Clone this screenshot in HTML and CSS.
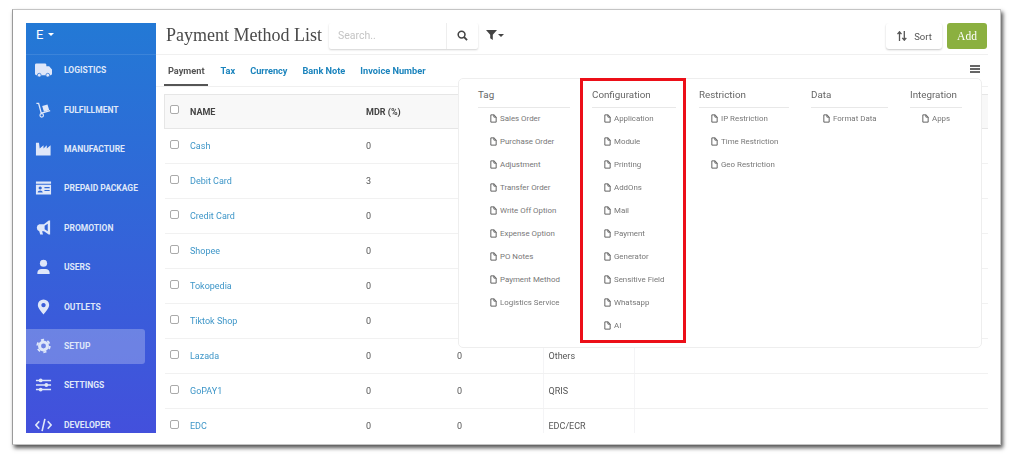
FILE: index.html
```html
<!DOCTYPE html>
<html lang="en">
<head>
    <meta charset="UTF-8">
    <title>Payment Method List</title>
    <link rel="stylesheet" href="styles.css">
</head>
<body>

<svg class="defs" width="0" height="0">
    <symbol id="file" viewBox="0 0 10 12">
        <path d="M1.2 .8h4.600l3 3v7.400h-7.600z M5.600 .8v3.200h3.200" fill="none" stroke="currentColor" stroke-width="1.300" stroke-linejoin="round"/>
    </symbol>
</svg>

<div class="frame">
    <!-- Sidebar -->
    <aside class="sidebar">
        <div class="brand">E <span class="caret"></span></div>
        <nav class="nav">
            <a class="nav-item">
                <svg class="nav-icon" viewBox="0 0 18 16"><path d="M1.500 1h9a1.500 1.500 0 0 1 1.500 1.500V4h3l3 3.500v4.500a1.500 1.500 0 0 1-1.500 1.500H1.500A1.500 1.500 0 0 1 0 12V2.500A1.500 1.500 0 0 1 1.500 1z"/><circle cx="4.500" cy="13.500" r="2" stroke="#2a72d6" stroke-width=".8"/><circle cx="13.500" cy="13.500" r="2" stroke="#2a72d6" stroke-width=".8"/></svg>
                LOGISTICS
            </a>
            <a class="nav-item">
                <svg class="nav-icon" viewBox="0 0 18 18"><path d="M1 1.500h2.500l3 11 10-2.700" fill="none" stroke="currentColor" stroke-width="1.500"/><circle cx="7" cy="15" r="2" fill="none" stroke="currentColor" stroke-width="1.300"/><path d="M7.500 4.500l6-1.700 2 6.500-6 1.700z"/></svg>
                FULFILLMENT
            </a>
            <a class="nav-item">
                <svg class="nav-icon" viewBox="0 0 18 16"><path d="M1 15V1.500h3.200l.8 6 4-3.500v3.500l3.500-3.500v3.500l4-3.500V15z"/></svg>
                MANUFACTURE
            </a>
            <a class="nav-item">
                <svg class="nav-icon" viewBox="0 0 18 16"><path fill-rule="evenodd" d="M1 1h16v2.500H1z M1 4.500h16V15H1z M5.500 6.300a1.700 1.700 0 1 0 .01 0z M2.800 12.800h5.400c0-3-5.400-3-5.400 0z M10 7h5.500v1.200H10z M10 10h5.500v1.200H10z"/></svg>
                PREPAID PACKAGE
            </a>
            <a class="nav-item">
                <svg class="nav-icon" viewBox="0 0 18 16"><path fill-rule="evenodd" d="M14.500 0h1.500v15h-1.500l-5-3.500H7.500l1 3.500H5.500l-1-3.500A4 4 0 0 1 4.500 4h5z M13.500 3.500l-3.300 2.200v3.600l3.300 2.200z"/></svg>
                PROMOTION
            </a>
            <a class="nav-item">
                <svg class="nav-icon" viewBox="0 0 18 16"><circle cx="9" cy="4" r="3.800"/><path d="M2.500 15.500v-1.500a4.500 4.500 0 0 1 4.500-4h4a4.500 4.500 0 0 1 4.500 4v1.500z"/></svg>
                USERS
            </a>
            <a class="nav-item">
                <svg class="nav-icon" viewBox="0 0 18 16"><path fill-rule="evenodd" d="M9 0a6 6 0 0 1 6 6c0 3.500-4 7.500-6 10-2-2.500-6-6.500-6-10a6 6 0 0 1 6-6z M9 3.700a2.300 2.300 0 1 0 .01 0z"/></svg>
                OUTLETS
            </a>
            <a class="nav-item active">
                <svg class="nav-icon" viewBox="0 0 18 16"><circle cx="9" cy="8" r="4.200" fill="none" stroke="currentColor" stroke-width="3.200"/><circle cx="9" cy="8" r="6.600" fill="none" stroke="currentColor" stroke-width="2" stroke-dasharray="3.300 3.610"/></svg>
                SETUP
            </a>
            <a class="nav-item">
                <svg class="nav-icon" viewBox="0 0 18 16"><path d="M1 2.500h16v1.500H1z M1 7.300h16v1.500H1z M1 12h16v1.500H1z"/><circle cx="6" cy="3.200" r="2"/><circle cx="12" cy="8" r="2"/><circle cx="6" cy="12.800" r="2"/></svg>
                SETTINGS
            </a>
            <a class="nav-item">
                <svg class="nav-icon" viewBox="0 0 18 16"><path d="M4.500 4L1 8l3.500 4 M13.500 4L17 8l-3.500 4 M10.500 1.500l-3 13" fill="none" stroke="currentColor" stroke-width="1.700"/></svg>
                DEVELOPER
            </a>
        </nav>
    </aside>

    <!-- Main -->
    <main class="main">
        <div class="topbar">
            <h1 class="title">Payment Method List</h1>
            <div class="search">
                <span class="search-input">Search..</span>
                <span class="search-btn">
                    <svg width="11" height="11" viewBox="0 0 12 12"><circle cx="5" cy="5" r="3.700" fill="none" stroke="currentColor" stroke-width="1.700"/><path d="M7.800 7.800l3.200 3.200" stroke="currentColor" stroke-width="2"/></svg>
                </span>
            </div>
            <span class="filter">
                <svg width="11" height="10" viewBox="0 0 11 10"><path d="M0 0h11L6.800 4.800V10L4.200 8.200V4.800z"/></svg>
                <span class="caret dark"></span>
            </span>
            <div class="actions">
                <button class="btn-sort">
                    <svg width="10" height="10" viewBox="0 0 10 10"><path d="M2.500 10V2M.5 3.200L2.500 .8l2 2.400 M7.300 0v8M5.300 6.800l2 2.400 2-2.400" fill="none" stroke="currentColor" stroke-width="1.300"/></svg>
                    Sort
                </button>
                <button class="btn-add">Add</button>
            </div>
        </div>

        <div class="tabs">
            <a class="tab active">Payment</a>
            <a class="tab">Tax</a>
            <a class="tab">Currency</a>
            <a class="tab">Bank Note</a>
            <a class="tab">Invoice Number</a>
            <span class="bars"></span>
        </div>

        <table class="list">
            <thead>
                <tr><th class="c-check"><span class="check"></span></th><th class="c-name">NAME</th><th class="c-num">MDR (%)</th><th class="c-num"></th><th class="c-type"></th><th></th></tr>
            </thead>
            <tbody>
                <tr><td><span class="check"></span></td><td><a>Cash</a></td><td>0</td><td></td><td></td><td></td></tr>
                <tr><td><span class="check"></span></td><td><a>Debit Card</a></td><td>3</td><td></td><td></td><td></td></tr>
                <tr><td><span class="check"></span></td><td><a>Credit Card</a></td><td>0</td><td></td><td></td><td></td></tr>
                <tr><td><span class="check"></span></td><td><a>Shopee</a></td><td>0</td><td></td><td></td><td></td></tr>
                <tr><td><span class="check"></span></td><td><a>Tokopedia</a></td><td>0</td><td></td><td></td><td></td></tr>
                <tr><td><span class="check"></span></td><td><a>Tiktok Shop</a></td><td>0</td><td></td><td></td><td></td></tr>
                <tr><td><span class="check"></span></td><td><a>Lazada</a></td><td>0</td><td>0</td><td>Others</td><td></td></tr>
                <tr><td><span class="check"></span></td><td><a>GoPAY1</a></td><td>0</td><td>0</td><td>QRIS</td><td></td></tr>
                <tr><td><span class="check"></span></td><td><a>EDC</a></td><td>0</td><td>0</td><td>EDC/ECR</td><td></td></tr>
            </tbody>
        </table>

        <!-- Dropdown menu -->
        <div class="menu">
            <div class="menu-col col-tag">
                <h4>Tag</h4>
                <a><svg class="file"><use href="#file"/></svg>Sales Order</a>
                <a><svg class="file"><use href="#file"/></svg>Purchase Order</a>
                <a><svg class="file"><use href="#file"/></svg>Adjustment</a>
                <a><svg class="file"><use href="#file"/></svg>Transfer Order</a>
                <a><svg class="file"><use href="#file"/></svg>Write Off Option</a>
                <a><svg class="file"><use href="#file"/></svg>Expense Option</a>
                <a><svg class="file"><use href="#file"/></svg>PO Notes</a>
                <a><svg class="file"><use href="#file"/></svg>Payment Method</a>
                <a><svg class="file"><use href="#file"/></svg>Logistics Service</a>
            </div>
            <div class="menu-col col-config">
                <h4>Configuration</h4>
                <a><svg class="file"><use href="#file"/></svg>Application</a>
                <a><svg class="file"><use href="#file"/></svg>Module</a>
                <a><svg class="file"><use href="#file"/></svg>Printing</a>
                <a><svg class="file"><use href="#file"/></svg>AddOns</a>
                <a><svg class="file"><use href="#file"/></svg>Mail</a>
                <a><svg class="file"><use href="#file"/></svg>Payment</a>
                <a><svg class="file"><use href="#file"/></svg>Generator</a>
                <a><svg class="file"><use href="#file"/></svg>Sensitive Field</a>
                <a><svg class="file"><use href="#file"/></svg>Whatsapp</a>
                <a><svg class="file"><use href="#file"/></svg>AI</a>
            </div>
            <div class="menu-col col-restrict">
                <h4>Restriction</h4>
                <a><svg class="file"><use href="#file"/></svg>IP Restriction</a>
                <a><svg class="file"><use href="#file"/></svg>Time Restriction</a>
                <a><svg class="file"><use href="#file"/></svg>Geo Restriction</a>
            </div>
            <div class="menu-col col-data">
                <h4>Data</h4>
                <a><svg class="file"><use href="#file"/></svg>Format Data</a>
            </div>
            <div class="menu-col col-integration">
                <h4>Integration</h4>
                <a><svg class="file"><use href="#file"/></svg>Apps</a>
            </div>
            <span class="highlight"></span>
        </div>
    </main>
</div>

</body>
</html>
```
FILE: styles.css
```css
html, body {
    height: 100%;
    overflow: hidden;
}
body {
    margin: 0;
    background-color: #fff;
    font-family: Roboto, "Liberation Sans", sans-serif;
}
.defs {
    position: absolute;
}
.frame {
    box-sizing: border-box;
    display: flex;
    width: 989px;
    height: 436px;
    margin: 9px 0 0 12px;
    padding: 13px 12px 11px 13px;
    border: 1px solid #c4c4c4;
    border-left-color: #9a9a9a;
    box-shadow: 2px 3px 4px #555;
    background-color: #fff;
    filter: blur(0.35px);
}

/* Sidebar */
.sidebar {
    flex: 0 0 130px;
    height: 410px;
    overflow: hidden;
    background: linear-gradient(180deg, #2379d5 0%, #4350dc 100%);
    color: #dfe7f9;
}
.brand {
    box-sizing: border-box;
    height: 32px;
    padding: 4px 0 0 10px;
    border-bottom: 1px solid rgba(255, 255, 255, 0.1);
    font-size: 13px;
    line-height: 16px;
    color: #fff;
}
.caret {
    display: inline-block;
    width: 0;
    height: 0;
    margin-left: 1px;
    vertical-align: 3px;
    border-left: 3px solid transparent;
    border-right: 3px solid transparent;
    border-top: 3px solid #fff;
}
.caret.dark {
    margin-left: 0;
    vertical-align: 4px;
    border-top-color: #444;
}
.nav {
    display: flex;
    flex-direction: column;
    gap: 4.4px;
    margin-top: -2.2px;
}
.nav-item {
    display: flex;
    align-items: center;
    gap: 12px;
    width: 119px;
    height: 35px;
    padding-left: 9px;
    box-sizing: border-box;
    border-radius: 0 3px 3px 0;
    font-size: 8.5px;
    font-weight: 700;
}
.nav-item.active {
    background-color: rgba(255, 255, 255, 0.25);
}
.nav-icon {
    flex: 0 0 17px;
    width: 17px;
    height: 16px;
    fill: currentColor;
}

/* Main */
.main {
    position: relative;
    flex: 1;
    min-width: 0;
    height: 410px;
    overflow: hidden;
}
.topbar {
    display: flex;
    align-items: flex-start;
    box-sizing: border-box;
    height: 32px;
    padding-left: 10px;
    border-bottom: 1px solid #f0f0f0;
}
.title {
    width: 163px;
    margin: 0;
    font-family: "Liberation Serif", serif;
    font-size: 18px;
    font-weight: 400;
    line-height: 25px;
    white-space: nowrap;
    color: #4a4a4a;
}
.search {
    display: flex;
    height: 26px;
    border-radius: 2px;
    box-shadow: 0 1px 2px rgba(0, 0, 0, 0.18);
}
.search-input {
    width: 108px;
    padding-left: 9px;
    border-right: 1px solid #eee;
    font-size: 10.5px;
    line-height: 25px;
    color: #c4c4c4;
}
.search-btn {
    display: flex;
    align-items: center;
    justify-content: center;
    width: 31px;
    padding-bottom: 2px;
    box-sizing: border-box;
    color: #444;
}
.filter {
    display: flex;
    align-items: center;
    gap: 1px;
    height: 24px;
    margin-left: 8px;
    fill: #444;
}
.actions {
    display: flex;
    gap: 5px;
    margin-left: auto;
    margin-right: 1px;
}
.btn-sort, .btn-add {
    height: 26px;
    border: none;
    border-radius: 3px;
    padding: 0;
    font-size: 9.5px;
}
.btn-sort {
    display: flex;
    align-items: center;
    justify-content: center;
    gap: 7px;
    width: 56px;
    padding-left: 1px;
    background-color: #fff;
    box-shadow: 0 1px 2px rgba(0, 0, 0, 0.22);
    font-family: Roboto, sans-serif;
    color: #555;
}
.btn-add {
    width: 40px;
    background-color: #8bb040;
    font-family: "Liberation Serif", serif;
    font-size: 11.5px;
    color: #fff;
}
.tabs {
    display: flex;
    align-items: stretch;
    gap: 15px;
    position: relative;
    height: 32px;
    box-sizing: border-box;
    padding-left: 8px;
    border-bottom: 1px solid #f0f0f0;
}
.tab {
    font-size: 9.2px;
    font-weight: 700;
    line-height: 31px;
    color: #1b84bd;
}
.tab.active {
    height: 31px;
    box-sizing: border-box;
    margin-right: -2px;
    padding: 0 3px 0 4px;
    border-bottom: 2px solid #555;
    color: #555;
}
.bars {
    position: absolute;
    right: 8px;
    top: 10px;
    width: 10px;
    height: 2px;
    background-color: #666;
    box-shadow: 0 3px 0 #666, 0 6px 0 #666;
}

/* Table */
.list {
    width: 824px;
    margin: 7px 0 0 8px;
    table-layout: fixed;
    border-collapse: collapse;
    font-size: 9px;
    color: #555;
}
.c-check { width: 15px; }
.c-name { width: 171px; }
.c-num { width: 86px; }
.c-type { width: 86px; }
.list th {
    height: 33px;
    padding: 0 0 0 5px;
    border-top: 1px solid #e6e6e6;
    border-bottom: 1px solid #e6e6e6;
    background-color: #f8f8f8;
    font-weight: 700;
    text-align: left;
    color: #444;
}
.list th:first-child {
    border-left: 1px solid #e6e6e6;
}
.list td {
    height: 34px;
    padding: 0 0 0 5px;
    border-bottom: 1px solid #f1f1f1;
}
.list td:nth-child(5), .list td:nth-child(6) {
    border-left: 1px solid #f4f4f6;
}
.list a {
    color: #3e96c8;
}
.check {
    display: inline-block;
    box-sizing: border-box;
    width: 9px;
    height: 9px;
    margin-bottom: 4px;
    border: 1px solid #aaa;
    border-radius: 2px;
    background-color: #fff;
    vertical-align: middle;
}

/* Dropdown menu */
.menu {
    position: absolute;
    left: 302px;
    top: 55px;
    display: flex;
    gap: 22px;
    box-sizing: border-box;
    width: 524px;
    height: 270px;
    padding: 7px 0 0 19px;
    border: 1px solid #eee;
    border-radius: 5px;
    background-color: #fff;
}
.menu-col h4 {
    height: 21px;
    margin: 0 0 -1px;
    border-bottom: 1px solid #e8e8e8;
    font-size: 9.8px;
    font-weight: 400;
    line-height: 18px;
    color: #666;
}
.menu-col a {
    display: flex;
    align-items: center;
    gap: 3px;
    height: 23px;
    padding-left: 12px;
    font-size: 7.9px;
    color: #777;
    white-space: nowrap;
}
.file {
    flex: 0 0 7px;
    width: 7px;
    height: 9px;
    color: #555;
}
.col-tag { width: 92px; }
.col-config { width: 84px; margin-right: 1px; }
.col-restrict { width: 90px; }
.col-data { width: 77px; }
.col-integration { width: 52px; }
.highlight {
    position: absolute;
    left: 121px;
    top: -1px;
    box-sizing: border-box;
    width: 106px;
    height: 265px;
    border: 3px solid #ec0f18;
}
```
